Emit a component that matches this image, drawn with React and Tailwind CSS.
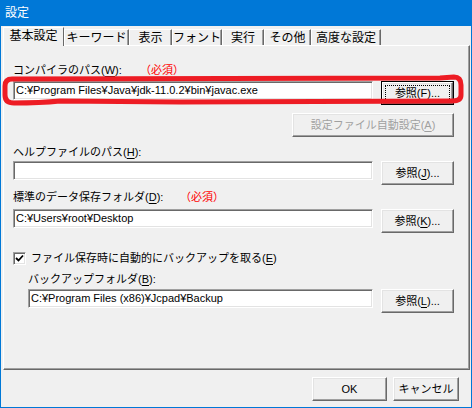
import React from "react";

const raised =
  "bg-[#f0f0f0] border border-t-white border-l-white border-r-[#696969] border-b-[#696969] shadow-[inset_-1px_-1px_0_#a0a0a0,inset_1px_1px_0_#e3e3e3]";

const sunken =
  "bg-white border border-t-[#a0a0a0] border-l-[#a0a0a0] border-r-white border-b-white shadow-[inset_1px_1px_0_#696969,inset_-1px_-1px_0_#e3e3e3]";

const TABS = [
  { label: "基本設定", w: "w-[61px]" },
  { label: "キーワード", w: "w-[65px]" },
  { label: "表示", w: "w-[43px]" },
  { label: "フォント", w: "w-[50px]" },
  { label: "実行", w: "w-[42px]" },
  { label: "その他", w: "w-[47px]" },
  { label: "高度な設定", w: "w-[70px]" },
];

const Key = ({ k }) => <span className="underline underline-offset-2">{k}</span>;

const Field = ({ value }) => (
  <div className={`flex-1 h-[19px] ${sunken} flex items-center pl-[2px] whitespace-nowrap overflow-hidden`}>
    {value}
  </div>
);

const BrowseBtn = ({ k, focused }) =>
  focused ? (
    <div className="w-[73px] h-[24px] border border-black">
      <div className={`w-full h-full ${raised} p-[2px]`}>
        <div className="w-full h-full border border-dotted border-black flex items-center justify-center">
          参照(<Key k={k} />)...
        </div>
      </div>
    </div>
  ) : (
    <div className={`w-[73px] h-[24px] ${raised} flex items-center justify-center`}>
      参照(<Key k={k} />)...
    </div>
  );

const Label = ({ children, className = "" }) => (
  <div className={`h-[14px] flex items-center whitespace-nowrap ${className}`}>{children}</div>
);

export default function App() {
  return (
    <div className="relative w-[472px] h-[408px] bg-[#0078d7] px-px pb-px flex flex-col font-['Liberation_Sans','Noto_Sans_CJK_JP',sans-serif] text-[11px] text-black leading-none">
      {/* title */}
      <div className="h-[26px] flex items-center pl-[4px] text-white text-[12px]">設定</div>

      <div className="flex-1 bg-[#f0f0f0] flex flex-col pl-[2px] pr-px">
        {/* tabs */}
        <div className="h-[19px] flex items-end">
          {TABS.map((t, i) =>
            i === 0 ? (
              <div
                key={t.label}
                className={`${t.w} h-[19px] -mb-px relative z-10 bg-[#f0f0f0] border-t border-l border-white border-r border-r-[#696969] flex items-center justify-center text-[12px] pb-[2px]`}
              >
                {t.label}
              </div>
            ) : (
              <div
                key={t.label}
                className={`${t.w} h-[16px] border-t border-l border-white border-r border-r-[#696969] shadow-[inset_-1px_0_0_#a0a0a0] flex items-center justify-center text-[12px]`}
              >
                {t.label}
              </div>
            )
          )}
        </div>

        {/* panel */}
        <div className="h-[325px] border border-t-white border-l-white border-r-[#696969] border-b-[#696969] shadow-[inset_-1px_-1px_0_#a0a0a0] flex flex-col pl-[9px] pr-[15px]">
          <Label className="mt-[17px]">
            <span className="w-[127px]">
              コンパイラのパス(<Key k="W" />):
            </span>
            <span className="text-[#ff0000]">（必須）</span>
          </Label>
          <div className="mt-[4px] flex items-start gap-[8px]">
            <Field value="C:¥Program Files¥Java¥jdk-11.0.2¥bin¥javac.exe" />
            <BrowseBtn k="F" focused />
          </div>

          <div className="mt-[8px] flex justify-end">
            <div className={`w-[162px] h-[24px] ${raised} flex items-center justify-center text-[#a0a0a0]`}>
              設定ファイル自動設定(<Key k="A" />)
            </div>
          </div>

          <Label className="mt-[8px]">
            ヘルプファイルのパス(<Key k="H" />):
          </Label>
          <div className="mt-[2px] flex items-start gap-[8px]">
            <Field value="" />
            <BrowseBtn k="J" />
          </div>

          <Label className="mt-[5px]">
            <span className="w-[167px]">
              標準のデータ保存フォルダ(<Key k="D" />):
            </span>
            <span className="text-[#ff0000]">（必須）</span>
          </Label>
          <div className="mt-[5px] flex items-start gap-[8px]">
            <Field value="C:¥Users¥root¥Desktop" />
            <BrowseBtn k="K" />
          </div>

          <Label className="mt-[18px] gap-[5px]">
            <div className={`w-[13px] h-[13px] ${sunken} flex items-center justify-center`}>
              <svg width="9" height="9" viewBox="0 0 9 9">
                <path d="M1 4 L3.5 6.5 L8 1.5" stroke="#000" strokeWidth="1.8" fill="none" />
              </svg>
            </div>
            <span>
              ファイル保存時に自動的にバックアップを取る(<Key k="E" />)
            </span>
          </Label>

          <div className="pl-[15px] flex flex-col">
            <Label className="mt-[7px]">
              バックアップフォルダ(<Key k="B" />):
            </Label>
            <div className="mt-[3px] flex items-start gap-[8px]">
              <Field value="C:¥Program Files (x86)¥Jcpad¥Backup" />
              <BrowseBtn k="L" />
            </div>
          </div>
        </div>

        {/* footer */}
        <div className="mt-[7px] flex justify-end gap-[6px] pr-[11px]">
          <div className={`w-[75px] h-[24px] ${raised} flex items-center justify-center`}>OK</div>
          <div className={`w-[66px] h-[24px] ${raised} flex items-center justify-center`}>キャンセル</div>
        </div>
      </div>

      {/* red annotation */}
      <svg className="absolute left-0 top-0 pointer-events-none" width="472" height="408">
        <path
          d="M12 79 L440 78 L454 77 Q461 77 461 85 L461 95 Q461 101 452 101 L180 102 L60 101 Q40 103 14 103 Q5 103 5 95 L5 86 Q5 79 12 79 Z"
          stroke="#ed1c24"
          strokeWidth="5"
          fill="none"
        />
      </svg>
    </div>
  );
}
